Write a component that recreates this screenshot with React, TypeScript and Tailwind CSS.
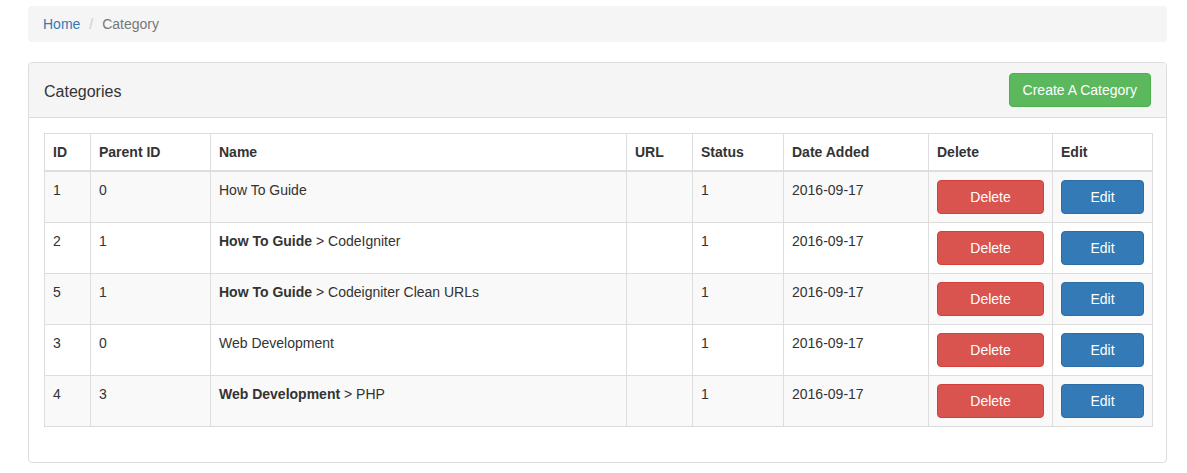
import React from "react";

type Row = {
  id: number;
  parentId: number;
  parent?: string;
  name: string;
  url: string;
  status: number;
  date: string;
};

const rows: Row[] = [
  { id: 1, parentId: 0, name: "How To Guide", url: "", status: 1, date: "2016-09-17" },
  { id: 2, parentId: 1, parent: "How To Guide", name: "CodeIgniter", url: "", status: 1, date: "2016-09-17" },
  { id: 5, parentId: 1, parent: "How To Guide", name: "Codeigniter Clean URLs", url: "", status: 1, date: "2016-09-17" },
  { id: 3, parentId: 0, name: "Web Development", url: "", status: 1, date: "2016-09-17" },
  { id: 4, parentId: 3, parent: "Web Development", name: "PHP", url: "", status: 1, date: "2016-09-17" },
];

const headers = ["ID", "Parent ID", "Name", "URL", "Status", "Date Added", "Delete", "Edit"];
const widths = ["w-[46px]", "w-[120px]", "w-[416px]", "w-[66px]", "w-[91px]", "w-[145px]", "w-[124px]", "w-[100px]"];

export default function App() {
  return (
    <div className="min-h-[473px] bg-white pl-[28px] pr-[20px] pt-[6px] text-[14px] leading-[20px] text-[#333] font-['Liberation_Sans',Arial,sans-serif]">
      {/* Breadcrumb */}
      <ol className="flex items-center rounded bg-[#f5f5f5] px-[15px] py-[8px] mb-[20px]">
        <li>
          <a href="#" className="text-[#337ab7]">Home</a>
        </li>
        <li className="text-[#777]">
          <span className="ml-[4px] px-[5px] text-[#ccc]">/&nbsp;</span>
          Category
        </li>
      </ol>

      {/* Panel */}
      <div className="rounded border border-[#ddd] bg-white">
        <div className="flex items-center justify-between rounded-t border-b border-[#ddd] bg-[#f5f5f5] px-[15px] py-[10px]">
          <h3 className="mt-[4px] text-[16px] text-[#333]">Categories</h3>
          <button className="rounded border border-[#4cae4c] bg-[#5cb85c] px-[13px] py-[6px] text-white">
            Create A Category
          </button>
        </div>

        <div className="p-[15px]">
          <table className="w-[1108px] table-fixed border border-[#ddd] mb-[20px]">
            <colgroup>
              {widths.map((w, i) => (
                <col key={i} className={w} />
              ))}
            </colgroup>
            <thead>
              <tr>
                {headers.map((h) => (
                  <th key={h} className="border border-b-2 border-[#ddd] p-[8px] text-left align-bottom font-bold">
                    {h}
                  </th>
                ))}
              </tr>
            </thead>
            <tbody>
              {rows.map((r, i) => (
                <tr key={r.id} className={i % 2 === 0 ? "bg-[#f9f9f9]" : "bg-white"}>
                  <td className="border border-[#ddd] p-[8px] align-top">{r.id}</td>
                  <td className="border border-[#ddd] p-[8px] align-top">{r.parentId}</td>
                  <td className="border border-[#ddd] p-[8px] align-top">
                    {r.parent && (
                      <>
                        <strong>{r.parent}</strong> &gt;{" "}
                      </>
                    )}
                    {r.name}
                  </td>
                  <td className="border border-[#ddd] p-[8px] align-top">{r.url}</td>
                  <td className="border border-[#ddd] p-[8px] align-top">{r.status}</td>
                  <td className="border border-[#ddd] p-[8px] align-top">{r.date}</td>
                  <td className="border border-[#ddd] p-[8px] align-top">
                    <button className="block w-full rounded border border-[#d43f3a] bg-[#d9534f] px-[12px] py-[6px] text-white">
                      Delete
                    </button>
                  </td>
                  <td className="border border-[#ddd] p-[8px] align-top">
                    <button className="block w-full rounded border border-[#2e6da4] bg-[#337ab7] px-[12px] py-[6px] text-white">
                      Edit
                    </button>
                  </td>
                </tr>
              ))}
            </tbody>
          </table>
        </div>
      </div>
    </div>
  );
}
